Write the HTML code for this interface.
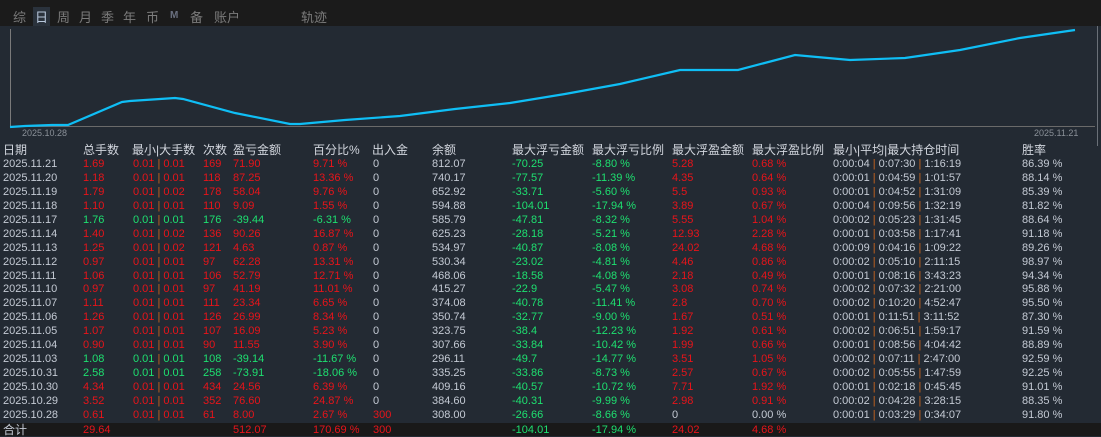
<!DOCTYPE html>
<html><head><meta charset="utf-8"><style>
body{margin:0;width:1101px;height:436px;background:#232a33;overflow:hidden;font-family:"Liberation Sans","Noto Sans CJK SC",sans-serif;position:relative}
.top{position:absolute;left:0;top:0;width:1101px;height:26px;background:#1b1b1b}
.tab{position:absolute;top:7px;font-size:13px;color:#7b7b7b}
.sel{background:#2a323c;color:#b8c8dc;padding:0 2px}
.r{position:absolute;left:0;width:1101px;height:14px;font-size:11px;line-height:14px;white-space:nowrap}
.r span{position:absolute;top:0}
.w{color:#c4cad4}.R{color:#e8141a}.G{color:#1ee070}.s{color:#c8641e}
.tot{background:#191919;height:13px}
.hd{color:#d2d6de;font-size:12px}
</style></head><body>
<div class="top"></div>
<span class="tab" style="left:13px">综</span>
<span class="tab sel" style="left:33px">日</span>
<span class="tab" style="left:57px">周</span>
<span class="tab" style="left:79px">月</span>
<span class="tab" style="left:101px">季</span>
<span class="tab" style="left:123px">年</span>
<span class="tab" style="left:146px">币</span>
<span class="tab" style="left:170px;font-size:10px;top:10px;font-weight:bold;color:#6a7080">M</span>
<span class="tab" style="left:190px">备</span>
<span class="tab" style="left:214px">账户</span>
<span class="tab" style="left:301px">轨迹</span>
<svg style="position:absolute;left:0;top:26px" width="1101" height="120">
<line x1="10.5" y1="3" x2="10.5" y2="101" stroke="#7a7a7a"/>
<line x1="10" y1="100.5" x2="1095" y2="100.5" stroke="#6a6a6a"/>
<line x1="1097.5" y1="0" x2="1097.5" y2="120" stroke="#6a7078"/>
<polyline fill="none" stroke="#0fbef5" stroke-width="2.2" points="10,101 25,100 52,99 68,99 122,76 130,75 175,72 183,73 235,87 290,98 300,98 345,94 400,90 455,83 510,77 565,68 620,58 680,44 738,44 795,29 850,34 905,32 960,24 1020,12 1075,4"/>
<text x="22" y="110" font-size="9" fill="#8a9098" font-family="Liberation Sans">2025.10.28</text>
<text x="1034" y="110" font-size="9" fill="#8a9098" font-family="Liberation Sans">2025.11.21</text>
</svg>
<div class="r hd" style="top:143px">
<span style="left:3px">日期</span><span style="left:83px">总手数</span><span style="left:132px">最小|大手数</span><span style="left:203px">次数</span><span style="left:233px">盈亏金额</span><span style="left:313px">百分比%</span><span style="left:372px">出入金</span><span style="left:432px">余额</span><span style="left:512px">最大浮亏金额</span><span style="left:592px">最大浮亏比例</span><span style="left:672px">最大浮盈金额</span><span style="left:752px">最大浮盈比例</span><span style="left:833px">最小|平均|最大持仓时间</span><span style="left:1022px">胜率</span>
</div>
<div id="rows"></div>
<script>
const d=[
["2025.11.21","1.69","0.01|0.01","169","71.90","9.71 %","0","812.07","-70.25","-8.80 %","5.28","0.68 %","0:00:04|0:07:30|1:16:19","86.39 %"],
["2025.11.20","1.18","0.01|0.01","118","87.25","13.36 %","0","740.17","-77.57","-11.39 %","4.35","0.64 %","0:00:01|0:04:59|1:01:57","88.14 %"],
["2025.11.19","1.79","0.01|0.02","178","58.04","9.76 %","0","652.92","-33.71","-5.60 %","5.5","0.93 %","0:00:01|0:04:52|1:31:09","85.39 %"],
["2025.11.18","1.10","0.01|0.01","110","9.09","1.55 %","0","594.88","-104.01","-17.94 %","3.89","0.67 %","0:00:04|0:09:56|1:32:19","81.82 %"],
["2025.11.17","1.76","0.01|0.01","176","-39.44","-6.31 %","0","585.79","-47.81","-8.32 %","5.55","1.04 %","0:00:02|0:05:23|1:31:45","88.64 %"],
["2025.11.14","1.40","0.01|0.02","136","90.26","16.87 %","0","625.23","-28.18","-5.21 %","12.93","2.28 %","0:00:01|0:03:58|1:17:41","91.18 %"],
["2025.11.13","1.25","0.01|0.02","121","4.63","0.87 %","0","534.97","-40.87","-8.08 %","24.02","4.68 %","0:00:09|0:04:16|1:09:22","89.26 %"],
["2025.11.12","0.97","0.01|0.01","97","62.28","13.31 %","0","530.34","-23.02","-4.81 %","4.46","0.86 %","0:00:02|0:05:10|2:11:15","98.97 %"],
["2025.11.11","1.06","0.01|0.01","106","52.79","12.71 %","0","468.06","-18.58","-4.08 %","2.18","0.49 %","0:00:01|0:08:16|3:43:23","94.34 %"],
["2025.11.10","0.97","0.01|0.01","97","41.19","11.01 %","0","415.27","-22.9","-5.47 %","3.08","0.74 %","0:00:02|0:07:32|2:21:00","95.88 %"],
["2025.11.07","1.11","0.01|0.01","111","23.34","6.65 %","0","374.08","-40.78","-11.41 %","2.8","0.70 %","0:00:02|0:10:20|4:52:47","95.50 %"],
["2025.11.06","1.26","0.01|0.01","126","26.99","8.34 %","0","350.74","-32.77","-9.00 %","1.67","0.51 %","0:00:01|0:11:51|3:11:52","87.30 %"],
["2025.11.05","1.07","0.01|0.01","107","16.09","5.23 %","0","323.75","-38.4","-12.23 %","1.92","0.61 %","0:00:02|0:06:51|1:59:17","91.59 %"],
["2025.11.04","0.90","0.01|0.01","90","11.55","3.90 %","0","307.66","-33.84","-10.42 %","1.99","0.66 %","0:00:01|0:08:56|4:04:42","88.89 %"],
["2025.11.03","1.08","0.01|0.01","108","-39.14","-11.67 %","0","296.11","-49.7","-14.77 %","3.51","1.05 %","0:00:02|0:07:11|2:47:00","92.59 %"],
["2025.10.31","2.58","0.01|0.01","258","-73.91","-18.06 %","0","335.25","-33.86","-8.73 %","2.57","0.67 %","0:00:02|0:05:55|1:47:59","92.25 %"],
["2025.10.30","4.34","0.01|0.01","434","24.56","6.39 %","0","409.16","-40.57","-10.72 %","7.71","1.92 %","0:00:01|0:02:18|0:45:45","91.01 %"],
["2025.10.29","3.52","0.01|0.01","352","76.60","24.87 %","0","384.60","-40.31","-9.99 %","2.98","0.91 %","0:00:02|0:04:28|3:28:15","88.35 %"],
["2025.10.28","0.61","0.01|0.01","61","8.00","2.67 %","300","308.00","-26.66","-8.66 %","0","0.00 %","0:00:01|0:03:29|0:34:07","91.80 %"]];
const xs=[3,83,133,203,233,313,373,432,512,592,672,752,833,1022];
let h="";
d.forEach((r,i)=>{
 const c=r[4][0]=="-"?"G":"R";
 const io=r[6]=="0"?"w":"R";
 const fp=r[10]=="0"?"w":"R";
 const cls=["w",c,c,c,c,c,io,"w","G","G",fp,fp,"w","w"];
 h+=`<div class="r" style="top:${157+i*13.94}px">`;
 r.forEach((v,j)=>{
  if(j==2||j==12)v=v.replace(/\|/g,' <b class="s" style="font-weight:normal">|</b> ');
  h+=`<span class="${cls[j]}" style="left:${xs[j]}px">${v}</span>`;});
 h+="</div>";});
h+=`<div class="r tot" style="top:423px"><span class="w" style="left:3px;font-size:12px">合计</span><span class="R" style="left:83px">29.64</span><span class="R" style="left:233px">512.07</span><span class="R" style="left:313px">170.69 %</span><span class="R" style="left:373px">300</span><span class="G" style="left:512px">-104.01</span><span class="G" style="left:592px">-17.94 %</span><span class="R" style="left:672px">24.02</span><span class="R" style="left:752px">4.68 %</span></div>`;
document.getElementById("rows").innerHTML=h;
</script>
</body></html>
